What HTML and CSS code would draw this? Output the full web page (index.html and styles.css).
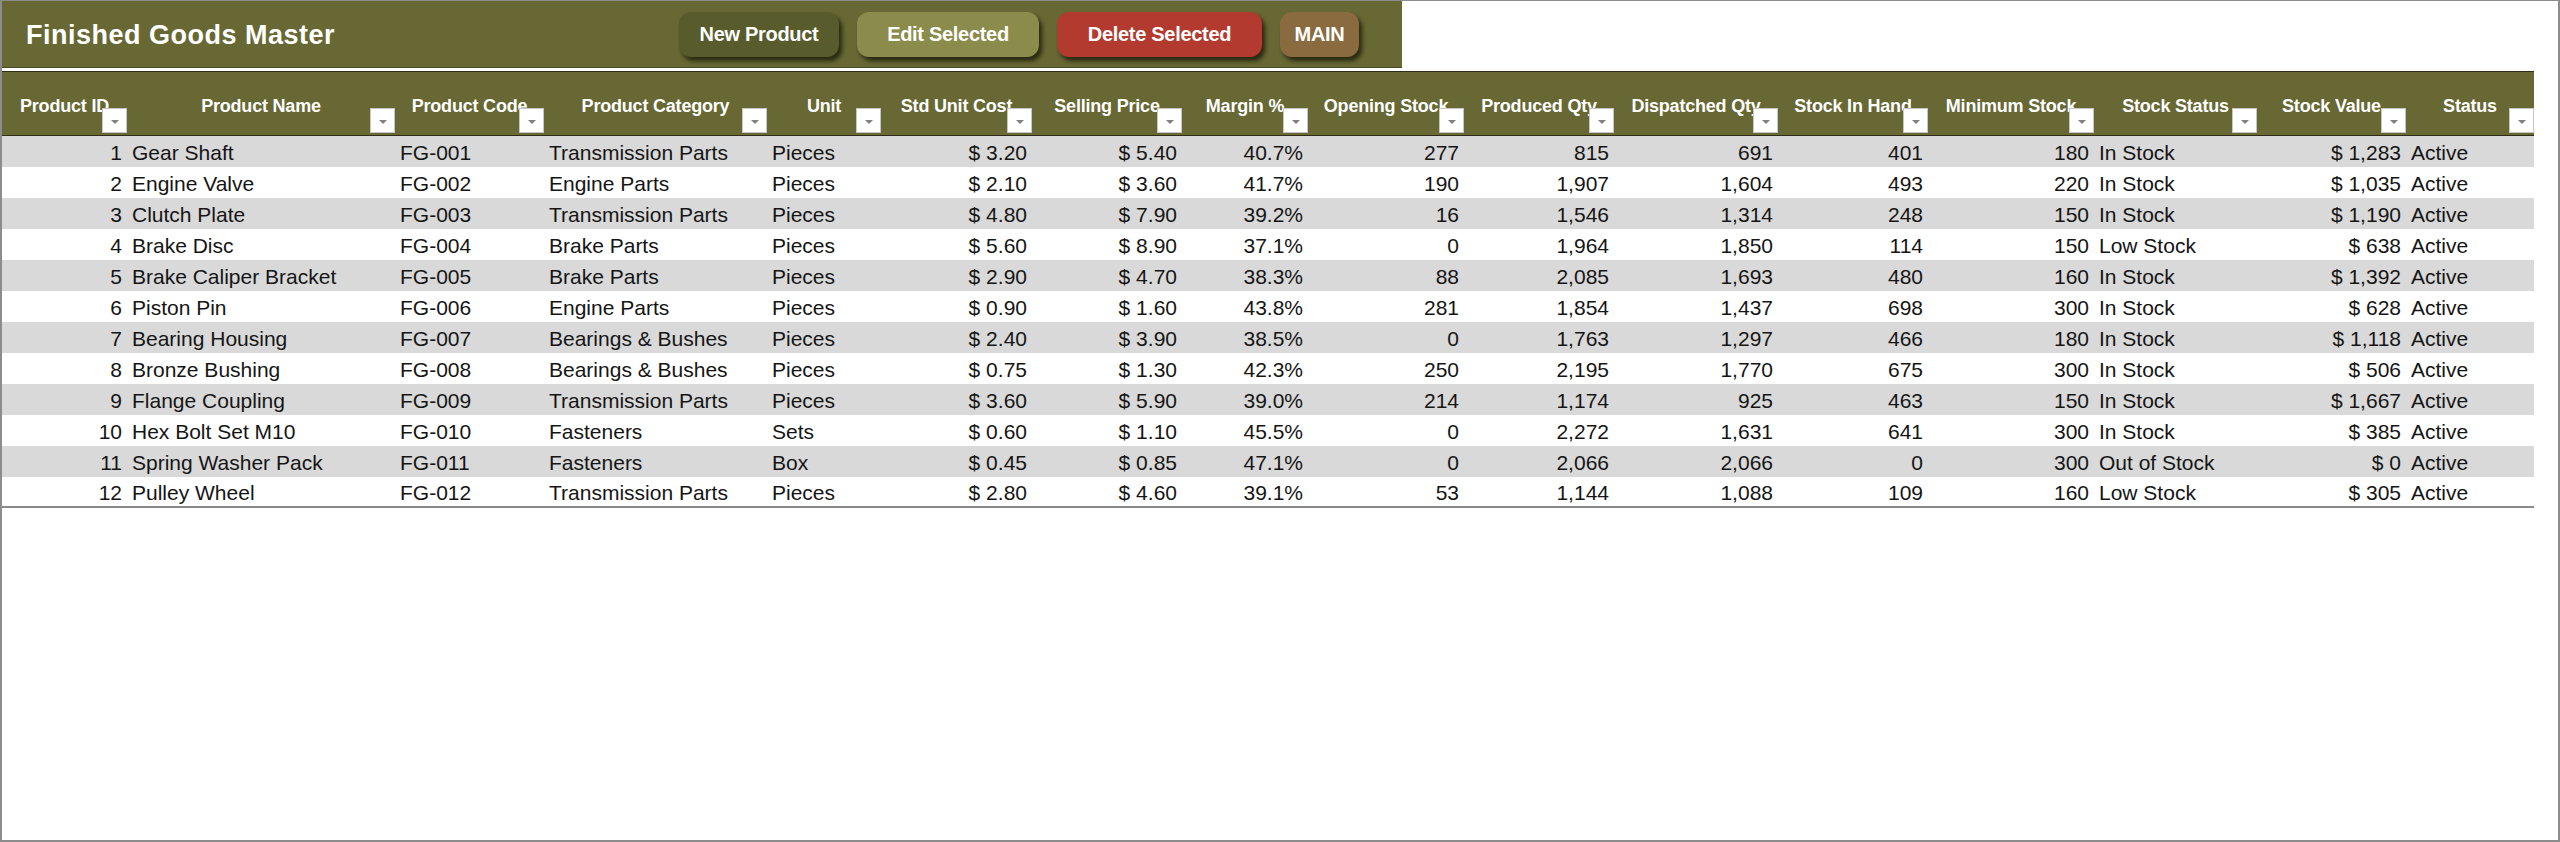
FILE: index.html
```html
<!DOCTYPE html>
<html lang="en">
<head>
<meta charset="utf-8">
<title>Finished Goods Master</title>
<link rel="stylesheet" href="styles.css">
</head>
<body>
<div class="page">
  <div class="titlebar">
    <h1 class="title">Finished Goods Master</h1>
    <div class="actions">
      <button class="btn btn-new">New Product</button>
      <button class="btn btn-edit">Edit Selected</button>
      <button class="btn btn-delete">Delete Selected</button>
      <button class="btn btn-main">MAIN</button>
    </div>
  </div>

  <div class="sheet">
    <div class="grid head">
      <div class="hc">Product ID<span class="flt"></span></div>
      <div class="hc">Product Name<span class="flt"></span></div>
      <div class="hc">Product Code<span class="flt"></span></div>
      <div class="hc">Product Category<span class="flt"></span></div>
      <div class="hc">Unit<span class="flt"></span></div>
      <div class="hc">Std Unit Cost<span class="flt"></span></div>
      <div class="hc">Selling Price<span class="flt"></span></div>
      <div class="hc">Margin %<span class="flt"></span></div>
      <div class="hc">Opening Stock<span class="flt"></span></div>
      <div class="hc">Produced Qty<span class="flt"></span></div>
      <div class="hc">Dispatched Qty<span class="flt"></span></div>
      <div class="hc">Stock In Hand<span class="flt"></span></div>
      <div class="hc">Minimum Stock<span class="flt"></span></div>
      <div class="hc">Stock Status<span class="flt"></span></div>
      <div class="hc">Stock Value<span class="flt"></span></div>
      <div class="hc">Status<span class="flt"></span></div>
    </div>

    <div class="grid row">
      <div class="r">1</div><div>Gear Shaft</div><div>FG-001</div><div>Transmission Parts</div><div>Pieces</div><div class="r">$ 3.20</div><div class="r">$ 5.40</div><div class="r">40.7%</div><div class="r">277</div><div class="r">815</div><div class="r">691</div><div class="r">401</div><div class="r">180</div><div>In Stock</div><div class="r">$ 1,283</div><div>Active</div>
    </div>
    <div class="grid row">
      <div class="r">2</div><div>Engine Valve</div><div>FG-002</div><div>Engine Parts</div><div>Pieces</div><div class="r">$ 2.10</div><div class="r">$ 3.60</div><div class="r">41.7%</div><div class="r">190</div><div class="r">1,907</div><div class="r">1,604</div><div class="r">493</div><div class="r">220</div><div>In Stock</div><div class="r">$ 1,035</div><div>Active</div>
    </div>
    <div class="grid row">
      <div class="r">3</div><div>Clutch Plate</div><div>FG-003</div><div>Transmission Parts</div><div>Pieces</div><div class="r">$ 4.80</div><div class="r">$ 7.90</div><div class="r">39.2%</div><div class="r">16</div><div class="r">1,546</div><div class="r">1,314</div><div class="r">248</div><div class="r">150</div><div>In Stock</div><div class="r">$ 1,190</div><div>Active</div>
    </div>
    <div class="grid row">
      <div class="r">4</div><div>Brake Disc</div><div>FG-004</div><div>Brake Parts</div><div>Pieces</div><div class="r">$ 5.60</div><div class="r">$ 8.90</div><div class="r">37.1%</div><div class="r">0</div><div class="r">1,964</div><div class="r">1,850</div><div class="r">114</div><div class="r">150</div><div>Low Stock</div><div class="r">$ 638</div><div>Active</div>
    </div>
    <div class="grid row">
      <div class="r">5</div><div>Brake Caliper Bracket</div><div>FG-005</div><div>Brake Parts</div><div>Pieces</div><div class="r">$ 2.90</div><div class="r">$ 4.70</div><div class="r">38.3%</div><div class="r">88</div><div class="r">2,085</div><div class="r">1,693</div><div class="r">480</div><div class="r">160</div><div>In Stock</div><div class="r">$ 1,392</div><div>Active</div>
    </div>
    <div class="grid row">
      <div class="r">6</div><div>Piston Pin</div><div>FG-006</div><div>Engine Parts</div><div>Pieces</div><div class="r">$ 0.90</div><div class="r">$ 1.60</div><div class="r">43.8%</div><div class="r">281</div><div class="r">1,854</div><div class="r">1,437</div><div class="r">698</div><div class="r">300</div><div>In Stock</div><div class="r">$ 628</div><div>Active</div>
    </div>
    <div class="grid row">
      <div class="r">7</div><div>Bearing Housing</div><div>FG-007</div><div>Bearings &amp; Bushes</div><div>Pieces</div><div class="r">$ 2.40</div><div class="r">$ 3.90</div><div class="r">38.5%</div><div class="r">0</div><div class="r">1,763</div><div class="r">1,297</div><div class="r">466</div><div class="r">180</div><div>In Stock</div><div class="r">$ 1,118</div><div>Active</div>
    </div>
    <div class="grid row">
      <div class="r">8</div><div>Bronze Bushing</div><div>FG-008</div><div>Bearings &amp; Bushes</div><div>Pieces</div><div class="r">$ 0.75</div><div class="r">$ 1.30</div><div class="r">42.3%</div><div class="r">250</div><div class="r">2,195</div><div class="r">1,770</div><div class="r">675</div><div class="r">300</div><div>In Stock</div><div class="r">$ 506</div><div>Active</div>
    </div>
    <div class="grid row">
      <div class="r">9</div><div>Flange Coupling</div><div>FG-009</div><div>Transmission Parts</div><div>Pieces</div><div class="r">$ 3.60</div><div class="r">$ 5.90</div><div class="r">39.0%</div><div class="r">214</div><div class="r">1,174</div><div class="r">925</div><div class="r">463</div><div class="r">150</div><div>In Stock</div><div class="r">$ 1,667</div><div>Active</div>
    </div>
    <div class="grid row">
      <div class="r">10</div><div>Hex Bolt Set M10</div><div>FG-010</div><div>Fasteners</div><div>Sets</div><div class="r">$ 0.60</div><div class="r">$ 1.10</div><div class="r">45.5%</div><div class="r">0</div><div class="r">2,272</div><div class="r">1,631</div><div class="r">641</div><div class="r">300</div><div>In Stock</div><div class="r">$ 385</div><div>Active</div>
    </div>
    <div class="grid row">
      <div class="r">11</div><div>Spring Washer Pack</div><div>FG-011</div><div>Fasteners</div><div>Box</div><div class="r">$ 0.45</div><div class="r">$ 0.85</div><div class="r">47.1%</div><div class="r">0</div><div class="r">2,066</div><div class="r">2,066</div><div class="r">0</div><div class="r">300</div><div>Out of Stock</div><div class="r">$ 0</div><div>Active</div>
    </div>
    <div class="grid row last">
      <div class="r">12</div><div>Pulley Wheel</div><div>FG-012</div><div>Transmission Parts</div><div>Pieces</div><div class="r">$ 2.80</div><div class="r">$ 4.60</div><div class="r">39.1%</div><div class="r">53</div><div class="r">1,144</div><div class="r">1,088</div><div class="r">109</div><div class="r">160</div><div>Low Stock</div><div class="r">$ 305</div><div>Active</div>
    </div>
  </div>
</div>
</body>
</html>
```

FILE: styles.css
```css
html, body {
  margin: 0;
  padding: 0;
  background: #ffffff;
}

.page {
  box-sizing: border-box;
  width: 2560px;
  height: 842px;
  border: 2px solid #8c8c8c;
  border-top-width: 1px;
  background: #ffffff;
  font-family: "Liberation Sans", Arial, sans-serif;
  overflow: hidden;
}

/* ---------- title bar ---------- */
.titlebar {
  box-sizing: border-box;
  width: 1400px;
  height: 67px;
  background: #676833;
  border-bottom: 1px solid #4a4b24;
  display: flex;
  align-items: flex-start;
}

.title {
  margin: 21px 0 0 24px;
  width: 653px;
  flex: none;
  font-size: 27px;
  line-height: 27px;
  font-weight: bold;
  letter-spacing: 0.5px;
  color: #ffffff;
}

.actions {
  display: flex;
  gap: 18px;
  margin-top: 11px;
}

.btn {
  height: 45px;
  border: none;
  border-radius: 12px;
  padding: 0;
  font-family: "Liberation Sans", Arial, sans-serif;
  font-size: 20px;
  line-height: 45px;
  font-weight: bold;
  letter-spacing: -0.3px;
  color: #ffffff;
  box-shadow: 3px 4px 4px rgba(20, 20, 5, 0.75);
  cursor: pointer;
}

.btn-new { width: 160px; background: #585b2b; }
.btn-edit { width: 182px; background: #8b8b4b; }
.btn-delete { width: 205px; background: #b23a2f; }
.btn-main { width: 79px; background: #8a6b3f; }

/* ---------- sheet ---------- */
.sheet {
  margin-top: 3px;
  width: 2532px;
}

.grid {
  display: grid;
  grid-template-columns: 125px 268px 149px 223px 114px 151px 150px 126px 156px 150px 164px 150px 166px 163px 149px 128px;
}

.head {
  box-sizing: border-box;
  height: 65px;
  background: #676833;
  border-top: 1px solid #2e2e18;
  border-bottom: 1px solid #2e2e18;
}

.hc {
  position: relative;
  display: flex;
  align-items: center;
  justify-content: center;
  padding-top: 5px;
  box-sizing: border-box;
  font-size: 18px;
  font-weight: bold;
  letter-spacing: -0.2px;
  color: #ffffff;
  white-space: nowrap;
}

.flt {
  position: absolute;
  right: 0;
  bottom: 2px;
  box-sizing: border-box;
  width: 25px;
  height: 25px;
  background: #ffffff;
  border: 1px solid #c6c6c6;
}

.flt::after {
  content: "";
  position: absolute;
  left: 8px;
  top: 11px;
  border-left: 4px solid transparent;
  border-right: 4px solid transparent;
  border-top: 4px solid #808080;
}

.row {
  box-sizing: border-box;
  height: 31px;
  font-size: 21px;
  color: #151515;
  background: #ffffff;
}

.row:nth-child(even) {
  background: #d9d9d9;
}

.row > div {
  padding: 3px 5px 0;
  line-height: 28px;
  white-space: nowrap;
  overflow: hidden;
}

.row > .r {
  text-align: right;
}

.row.last {
  border-bottom: 2px solid #8a8a8a;
}

.row.last > div {
  line-height: 26px;
}
```
